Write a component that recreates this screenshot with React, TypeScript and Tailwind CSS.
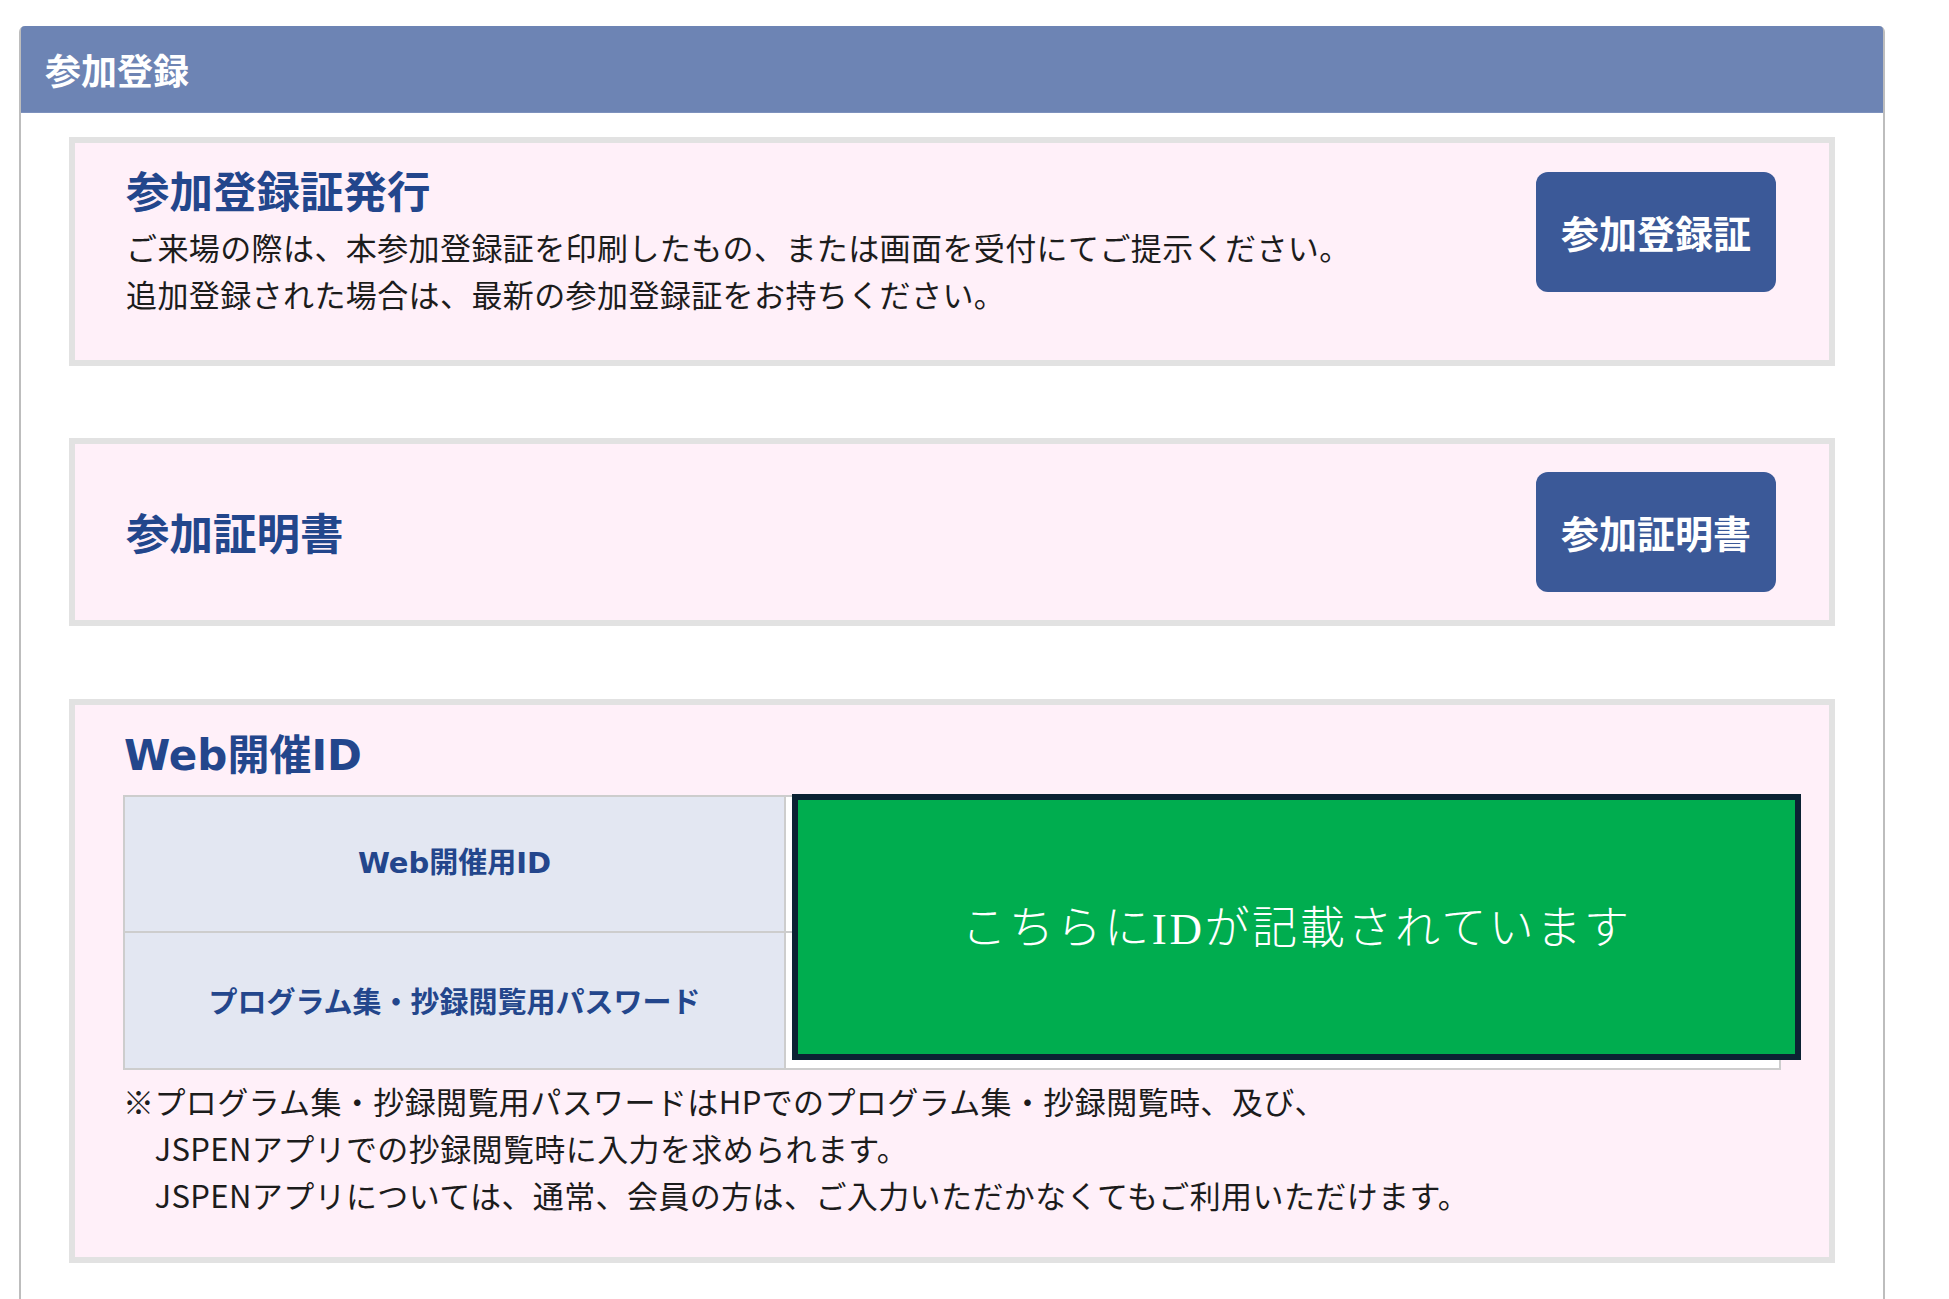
import React from "react";

const cardCls = "mx-[48px] border-[6px] border-[#e2e2e2] bg-[#fff0f9]";
const headFont = "font-['DejaVu_Sans','Noto_Sans_CJK_JP',sans-serif]";
const bodyFont = "font-['Noto_Sans_CJK_JP',sans-serif]";

function BlueButton({ label }: { label: string }) {
  return (
    <button
      type="button"
      className={`w-[240px] h-[120px] shrink-0 rounded-[12px] bg-[#3b5998] text-white text-[38px] leading-none font-bold ${bodyFont}`}
    >
      {label}
    </button>
  );
}

export default function App() {
  return (
    <div className="h-[1299px] w-full overflow-hidden bg-white pt-[26px]">
      <div className="ml-[19px] w-[1866px] h-full border-x-2 border-[#bdbdbd] rounded-t-[6px] bg-white">
        <div className="h-[87px] bg-[#6d84b4] rounded-t-[4px] flex items-center pl-[24px] border-b border-[#7d91bd]">
          <span className={`text-white text-[36px] font-bold leading-none ${bodyFont}`}>参加登録</span>
        </div>

        <div className="pt-[24px]">
          {/* Card 1 */}
          <div className={`${cardCls} flex items-start justify-between pt-[22px] pb-[43px] pl-[51px] pr-[53px]`}>
            <div className={`${bodyFont}`}>
              <h2 className="text-[43.5px] leading-[50px] font-bold text-[#23468c]">参加登録証発行</h2>
              <div className="mt-[8px] text-[31px] tracking-[0.4px] leading-[47px] text-[#1c1c1c] whitespace-nowrap">
                <div>ご来場の際は、本参加登録証を印刷したもの、または画面を受付にてご提示ください。</div>
                <div>追加登録された場合は、最新の参加登録証をお持ちください。</div>
              </div>
            </div>
            <div className="mt-[7px]">
              <BlueButton label="参加登録証" />
            </div>
          </div>

          {/* Card 2 */}
          <div className={`${cardCls} mt-[72px] flex items-center justify-between py-[28px] pl-[51px] pr-[53px]`}>
            <h2 className={`text-[43.5px] leading-[50px] font-bold text-[#23468c] ${bodyFont}`}>参加証明書</h2>
            <BlueButton label="参加証明書" />
          </div>

          {/* Card 3 */}
          <div className={`${cardCls} mt-[73px] pt-[26px] pb-[39px] pl-[48px] pr-[49px]`}>
            <h2 className={`ml-[1px] text-[42px] leading-[50px] font-bold text-[#23468c] ${headFont}`}>Web開催ID</h2>
            <div className="relative mt-[14px] w-[1658px] h-[275px] border-2 border-[#cdcdcd] bg-white">
              <div className="grid grid-cols-[661px_1fr] grid-rows-[1fr_1fr] h-full">
                <div className={`bg-[#e3e7f2] border-r-2 border-b-2 border-[#cdcdcd] flex items-center justify-center text-[29px] font-bold text-[#23468c] ${headFont}`}>
                  Web開催用ID
                </div>
                <div className="border-b-2 border-[#cdcdcd] bg-white" />
                <div className={`bg-[#e3e7f2] border-r-2 border-[#cdcdcd] flex items-center justify-center text-[29px] font-bold text-[#23468c] ${bodyFont}`}>
                  プログラム集・抄録閲覧用パスワード
                </div>
                <div className="bg-white" />
              </div>
              <div className="absolute left-[667px] top-[-3px] w-[1009px] h-[266px] border-[6px] border-[#0b2233] bg-[#00ad4f] flex items-center justify-center">
                <span className={`text-white text-[45px] font-light tracking-[2.6px] leading-none whitespace-nowrap ${bodyFont}`}>
                  こちらに<span className="font-['Liberation_Serif',serif] font-normal">ID</span>が記載されています
                </span>
              </div>
            </div>
            <div className={`mt-[7px] text-[31px] tracking-[0.4px] leading-[47px] text-[#1c1c1c] whitespace-nowrap ${bodyFont}`}>
              <div>※プログラム集・抄録閲覧用パスワードはHPでのプログラム集・抄録閲覧時、及び、</div>
              <div>　JSPENアプリでの抄録閲覧時に入力を求められます。</div>
              <div>　JSPENアプリについては、通常、会員の方は、ご入力いただかなくてもご利用いただけます。</div>
            </div>
          </div>
        </div>
      </div>
    </div>
  );
}
